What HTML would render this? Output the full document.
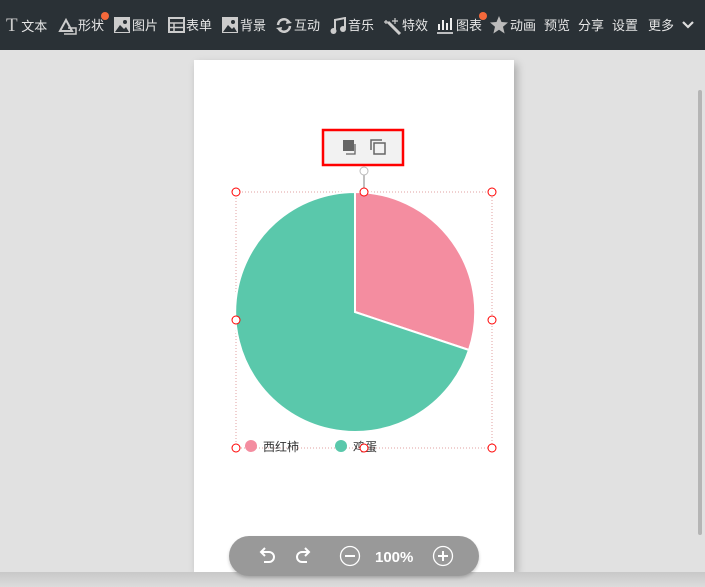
<!DOCTYPE html>
<html><head><meta charset="utf-8"><style>
body{margin:0;width:705px;height:587px;overflow:hidden;background:#e1e1e1;font-family:"Liberation Sans","Noto Sans CJK SC",sans-serif;position:relative}
.tb{position:absolute;left:0;top:0;width:705px;height:50px;background:#2a3136;color:#e6e6e6;font-size:13px}
.it{position:absolute;top:17px;line-height:17px;white-space:nowrap}
.dot{position:absolute;width:8px;height:8px;border-radius:50%;background:#f5693b}
.page{position:absolute;left:194px;top:60px;width:320px;height:512px;background:#fff;box-shadow:3px 4px 8px rgba(0,0,0,.25)}
.bot{position:absolute;left:0;top:572px;width:705px;height:15px;background:linear-gradient(#c8c8c8,#dcdcdc)}
.sb{position:absolute;left:698px;top:90px;width:4px;height:445px;background:#b5b5b5;border-radius:2px}
.zoom{position:absolute;left:229px;top:536px;width:250px;height:40px;border-radius:20px;background:#999;color:#fff;box-shadow:0 2px 3px rgba(0,0,0,.2)}
</style></head><body>
<div class="tb">
<div class="it" style="left:6px"><span style="font-family:'Liberation Serif';font-size:19px;color:#ccc">T</span> 文本</div>
<svg style="position:absolute;left:58px;top:17px" width="20" height="18"><path d="M2 14 L8 3 L14 14 Z" fill="none" stroke="#ccc" stroke-width="2"/><path d="M10 11 H18 V17 H6" fill="none" stroke="#ccc" stroke-width="1.5"/></svg>
<div class="it" style="left:78px">形状</div><div class="dot" style="left:101px;top:12px"></div>
<svg style="position:absolute;left:114px;top:17px" width="16" height="16"><rect width="16" height="16" fill="#ccc"/><path d="M1 15 L6 8 L10 12 L12 10 L15 15Z" fill="#2a3136"/><circle cx="11" cy="5" r="2" fill="#2a3136"/></svg>
<div class="it" style="left:132px">图片</div>
<svg style="position:absolute;left:168px;top:17px" width="17" height="16"><rect x="1" y="1" width="15" height="14" fill="none" stroke="#ccc" stroke-width="2"/><path d="M1 6H16M1 10.5H16M6 6V15" stroke="#ccc" stroke-width="1.5"/></svg>
<div class="it" style="left:186px">表单</div>
<svg style="position:absolute;left:222px;top:17px" width="16" height="16"><rect width="16" height="16" fill="#ccc"/><path d="M1 15 L6 8 L10 12 L12 10 L15 15Z" fill="#2a3136"/><circle cx="11" cy="5" r="2" fill="#2a3136"/></svg>
<div class="it" style="left:240px">背景</div>
<svg style="position:absolute;left:275px;top:17px" width="18" height="17"><path d="M3 8 A6 6 0 0 1 14 5 M15 9 A6 6 0 0 1 4 12" fill="none" stroke="#ccc" stroke-width="2.5"/><path d="M12 2 L17 6 L11 7Z M6 15 L1 11 L7 10Z" fill="#ccc"/></svg>
<div class="it" style="left:294px">互动</div>
<svg style="position:absolute;left:330px;top:17px" width="17" height="17"><path d="M5 13 V3 L15 1 V11" fill="none" stroke="#ccc" stroke-width="2"/><circle cx="3.5" cy="14" r="3" fill="#ccc"/><circle cx="13" cy="12" r="3" fill="#ccc"/></svg>
<div class="it" style="left:348px">音乐</div>
<svg style="position:absolute;left:384px;top:17px" width="18" height="18"><path d="M4 5 L16 17" stroke="#ccc" stroke-width="3"/><path d="M11 1V7M8 4H14M2 3V7M0 5H4" stroke="#ccc" stroke-width="1.2"/></svg>
<div class="it" style="left:402px">特效</div>
<svg style="position:absolute;left:437px;top:16px" width="16" height="18"><path d="M2 8V14M6 4V14M10 7V14M14 2V14" stroke="#eee" stroke-width="2"/><path d="M0 17H16" stroke="#eee" stroke-width="1.5"/></svg>
<div class="it" style="left:456px">图表</div><div class="dot" style="left:479px;top:12px"></div>
<svg style="position:absolute;left:490px;top:16px" width="18" height="18"><path d="M9 0 L11.5 6 L18 6.5 L13 10.8 L14.6 17.5 L9 13.8 L3.4 17.5 L5 10.8 L0 6.5 L6.5 6Z" fill="#bbb"/></svg>
<div class="it" style="left:510px">动画</div>
<div class="it" style="left:544px">预览</div>
<div class="it" style="left:578px">分享</div>
<div class="it" style="left:612px">设置</div>
<div class="it" style="left:648px">更多</div>
<svg style="position:absolute;left:682px;top:21px" width="12" height="8"><path d="M1 1 L6 6 L11 1" fill="none" stroke="#ddd" stroke-width="2.2"/></svg>
</div>
<div class="page"></div>
<div class="bot"></div>
<div class="sb"></div>
<svg style="position:absolute;left:0;top:0" width="705" height="587">
<rect x="323" y="130" width="80" height="35" fill="#f2f2f2" stroke="#f00" stroke-width="2.5"/>
<rect x="343" y="140" width="11" height="11" fill="#666"/><path d="M355 144V154H346" fill="none" stroke="#666" stroke-width="1.3"/>
<path d="M371 150V140H382" fill="none" stroke="#666" stroke-width="1.5"/><rect x="374" y="143" width="11" height="11" fill="none" stroke="#666" stroke-width="1.5"/>
<line x1="364" y1="175" x2="364" y2="191" stroke="#aaa" stroke-width="1.5"/>
<circle cx="364" cy="171" r="4" fill="#fff" stroke="#bbb"/>
<rect x="236" y="192" width="256" height="256" fill="none" stroke="#e0a0a0" stroke-dasharray="1,2"/>
<path d="M355 312 L355 192 A120 120 0 0 1 469 350 Z" fill="#f48da0" stroke="#fff" stroke-width="2"/>
<path d="M355 312 L469 350 A120 120 0 1 1 355 192 Z" fill="#5ac8ab" stroke="#fff" stroke-width="2"/>
<g fill="#fff" stroke="#f00" stroke-width="1">
<circle cx="236" cy="192" r="4"/><circle cx="364" cy="192" r="4"/><circle cx="492" cy="192" r="4"/>
<circle cx="236" cy="320" r="4"/><circle cx="492" cy="320" r="4"/>
</g>
<circle cx="251" cy="446" r="6" fill="#f48da0"/><circle cx="341" cy="446" r="6" fill="#5ac8ab"/>
<text x="263" y="451" font-size="12" fill="#333" font-family="Liberation Sans,Noto Sans CJK SC,sans-serif">西红柿</text>
<text x="353" y="451" font-size="12" fill="#333" font-family="Liberation Sans,Noto Sans CJK SC,sans-serif">鸡蛋</text>
<g fill="#fff" stroke="#f00" stroke-width="1"><circle cx="236" cy="448" r="4"/><circle cx="364" cy="448" r="4"/><circle cx="492" cy="448" r="4"/></g>
</svg>
<div class="zoom">
<svg width="250" height="40"><g fill="none" stroke="#fff" stroke-width="2">
<path d="M36 12 L32 16 L36 20 M32 16 H40 A5 5 0 0 1 40 26 H35"/>
<path d="M76 12 L80 16 L76 20 M80 16 H73 A5 5 0 0 0 73 26 H78" />
<circle cx="121" cy="20" r="9.5" stroke-width="1.3"/><path d="M116 20H126"/>
<circle cx="214" cy="20" r="9.5" stroke-width="1.3"/><path d="M209 20H219M214 15V25"/></g>
<text x="146" y="26" font-size="15" font-weight="bold" fill="#fff" font-family="Liberation Sans,sans-serif">100%</text></svg>
</div>
</body></html>
